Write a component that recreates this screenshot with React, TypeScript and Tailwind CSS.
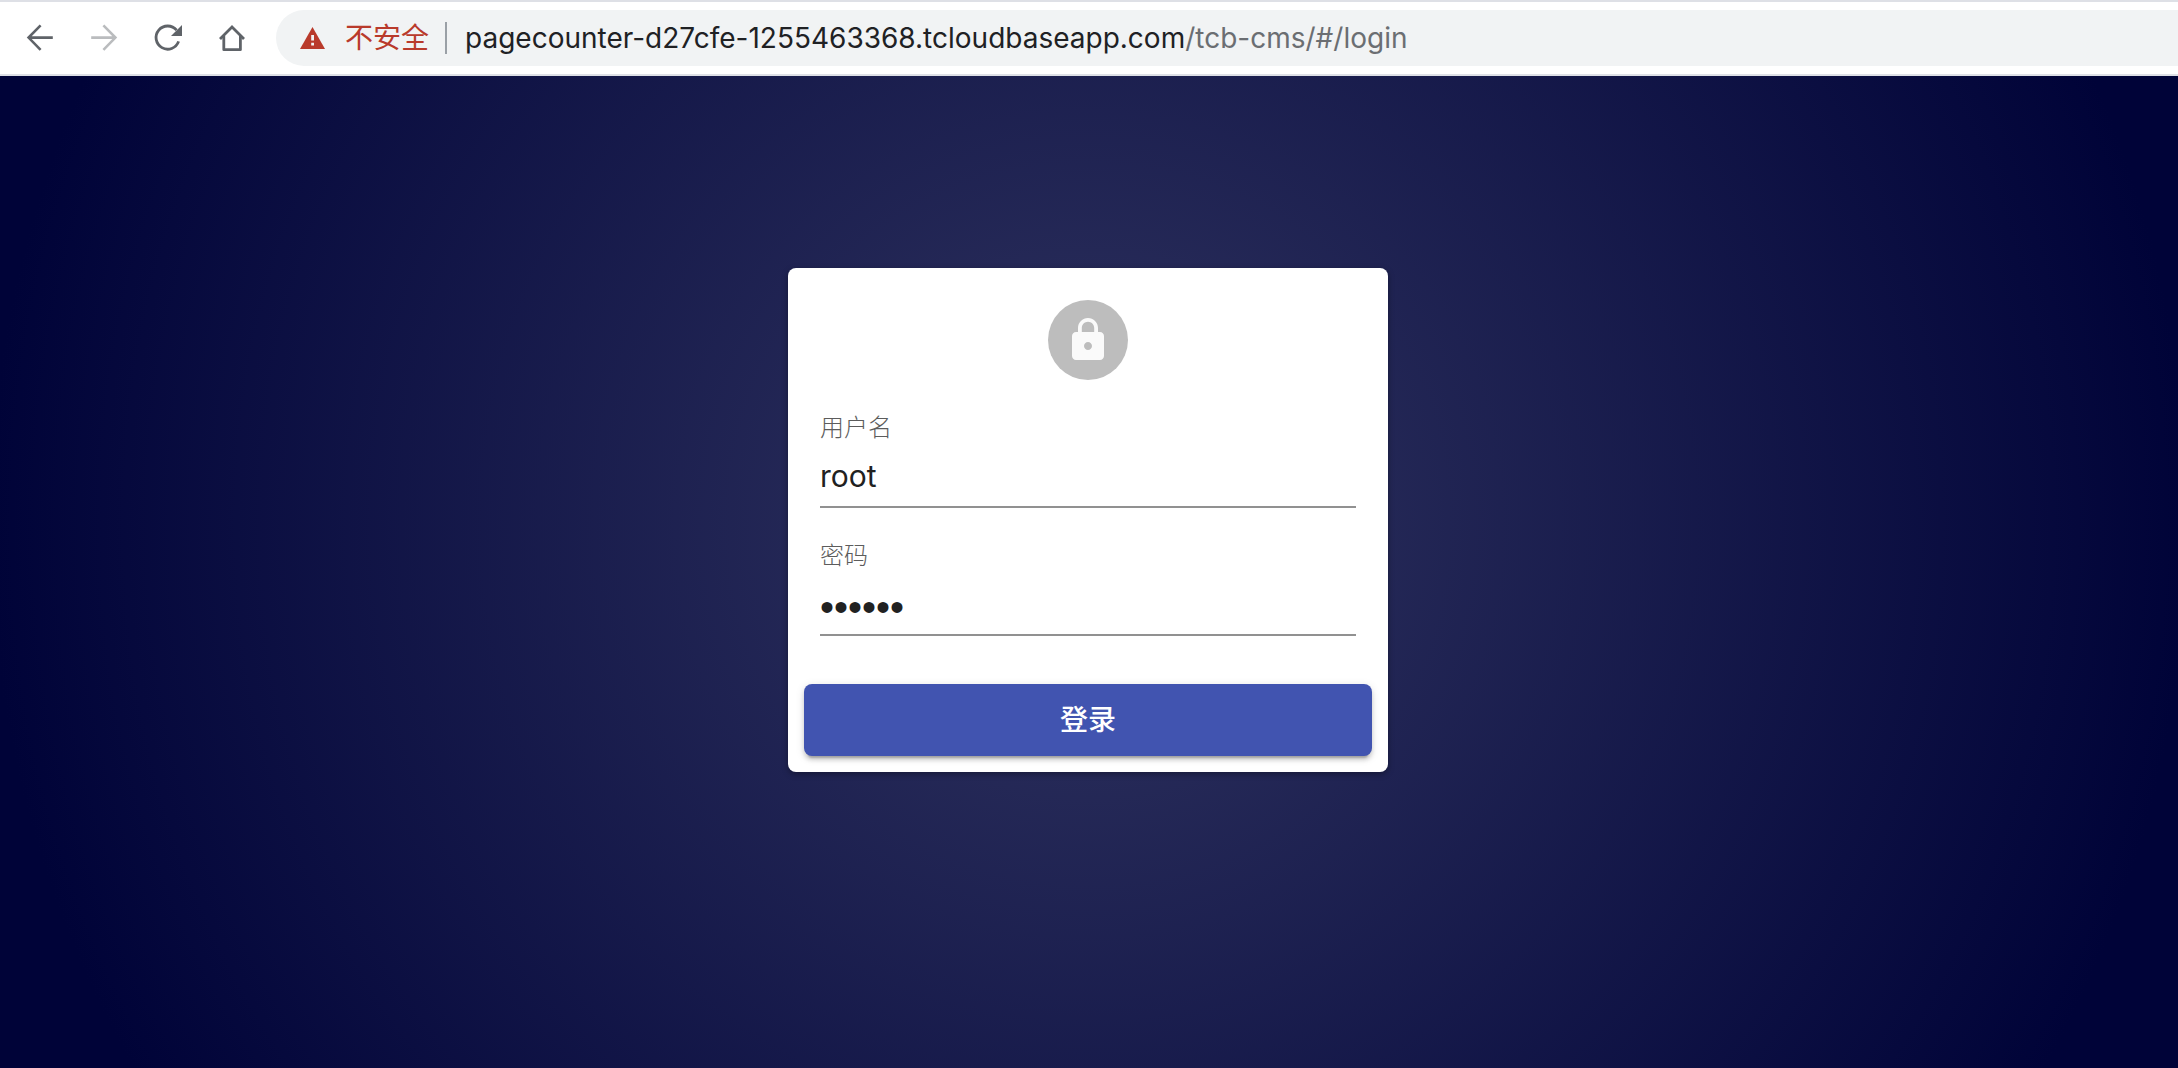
import React, { useState } from 'react';

const BackIcon = () => (
  <svg className="w-8 h-8" viewBox="0 0 32 32" fill="none" stroke="currentColor" strokeWidth="2.6">
    <path d="M28.8 15.6H5M16.6 3.4L4.6 15.6l12 12.2" />
  </svg>
);

const ForwardIcon = () => (
  <svg className="w-8 h-8" viewBox="0 0 32 32" fill="none" stroke="currentColor" strokeWidth="2.6">
    <path d="M3.2 15.6H27M15.4 3.4l12 12.2-12 12.2" />
  </svg>
);

const ReloadIcon = () => (
  <svg className="w-8 h-8" viewBox="0 0 32 32" fill="none" stroke="currentColor" strokeWidth="2.8">
    <path d="M26.6 19.4A11.6 11.6 0 1 1 24.6 8.2" />
    <path d="M30 3v11H19z" fill="currentColor" stroke="none" />
  </svg>
);

const HomeIcon = () => (
  <svg className="w-8 h-8" viewBox="0 0 32 32" fill="none" stroke="currentColor" strokeWidth="2.8">
    <path d="M4 17L16 5l12 12" />
    <path d="M7.8 14v13.7h16.6V14" strokeLinejoin="round" />
  </svg>
);

const WarningIcon = () => (
  <svg className="w-[25px] h-[22px]" viewBox="0 0 25 22" aria-hidden="true">
    <path d="M12.5 0L25 22H0z" fill="#b93a2b" />
    <path d="M11.2 8h2.8v5.6h-2.8zM11.2 15.8h2.8v2.8h-2.8z" fill="#f1f3f4" />
  </svg>
);

const LockIcon = () => (
  <svg className="w-12 h-12" viewBox="0 0 24 24" fill="#fafafa" aria-hidden="true">
    <path d="M18 8h-1V6c0-2.760-2.240-5-5-5S7 3.240 7 6v2H6c-1.100 0-2 .900-2 2v10c0 1.100.900 2 2 2h12c1.100 0 2-.900 2-2V10c0-1.100-.900-2-2-2zm-6 9c-1.100 0-2-.900-2-2s.900-2 2-2 2 .900 2 2-.900 2-2 2zm3.100-9H8.900V6c0-1.710 1.390-3.100 3.100-3.100 1.710 0 3.100 1.390 3.100 3.100v2z" />
  </svg>
);

const navButtons = [
  { label: 'Back', Icon: BackIcon, disabled: false },
  { label: 'Forward', Icon: ForwardIcon, disabled: true },
  { label: 'Reload', Icon: ReloadIcon, disabled: false },
  { label: 'Home', Icon: HomeIcon, disabled: false },
];

/**
 * Browser toolbar with navigation buttons and the address bar
 */
const Toolbar: React.FC = () => (
  <header className="flex items-center h-[76px] pl-2 bg-white border-y-2 border-[#dee0e6] overflow-hidden">
    <nav className="flex shrink-0 mr-3">
      {navButtons.map(({ label, Icon, disabled }) => (
        <button
          key={label}
          type="button"
          aria-label={label}
          disabled={disabled}
          className="flex items-center justify-center w-16 h-14 text-[#5f6368] disabled:text-[#babcbe]"
        >
          <Icon />
        </button>
      ))}
    </nav>
    <div className="flex items-center grow h-14 pl-6 rounded-l-full bg-[#f1f3f4] text-[28px] whitespace-nowrap">
      <WarningIcon />
      <span className="ml-5 text-[#b93a2b]">不安全</span>
      <span className="w-0.5 h-8 ml-4 mr-[18px] bg-[#9aa0a6]" />
      <span className="text-[#202124]">
        pagecounter-d27cfe-1255463368.tcloudbaseapp.com
        <span className="text-[#6b6e72]">/tcb-cms/#/login</span>
      </span>
    </div>
  </header>
);

interface FieldProps {
  id: string;
  label: string;
  type: string;
  value: string;
  onChange: (value: string) => void;
}

const Field: React.FC<FieldProps> = ({ id, label, type, value, onChange }) => (
  <div className="flex flex-col mt-8 border-b-2 border-[#919191]">
    <label htmlFor={id} className="text-2xl leading-8 font-light text-[#5c5c5c]">
      {label}
    </label>
    <input
      id={id}
      type={type}
      value={value}
      onChange={e => onChange(e.target.value)}
      className={
        type === 'password'
          ? "h-[62px] pt-2 font-['Liberation_Sans',sans-serif] text-[40px] text-[#212121] outline-none"
          : 'h-[62px] pt-0.5 text-[30px] text-[#212121] outline-none'
      }
    />
  </div>
);

const LoginCard: React.FC = () => {
  const [username, setUsername] = useState('root');
  const [password, setPassword] = useState('123456');

  return (
    <form
      className="w-[600px] rounded-lg bg-white shadow-[0_2px_6px_rgba(0,0,0,0.35)]"
      onSubmit={e => e.preventDefault()}
    >
      <div className="flex justify-center pt-8">
        <div className="flex items-center justify-center w-20 h-20 rounded-full bg-[#bdbdbd]">
          <LockIcon />
        </div>
      </div>
      <div className="px-8 pb-12">
        <Field id="username" label="用户名" type="text" value={username} onChange={setUsername} />
        <Field id="password" label="密码" type="password" value={password} onChange={setPassword} />
      </div>
      <div className="px-4 pb-4">
        <button
          type="submit"
          className="w-full h-[72px] rounded-lg bg-[#4154b0] text-[28px] font-medium text-white shadow-[0_6px_2px_-4px_rgba(0,0,0,0.2),0_4px_4px_rgba(0,0,0,0.14),0_2px_10px_rgba(0,0,0,0.12)]"
        >
          登录
        </button>
      </div>
    </form>
  );
};

export default function App() {
  return (
    <div className="flex flex-col min-h-screen font-[Inter,'Noto_Sans_CJK_SC',sans-serif]">
      <Toolbar />
      <main className="flex grow justify-center items-start pt-48 pb-12 pr-0.5 bg-[radial-gradient(circle_1100px_at_50%_448px,#303460,#000338)]">
        <LoginCard />
      </main>
    </div>
  );
}
